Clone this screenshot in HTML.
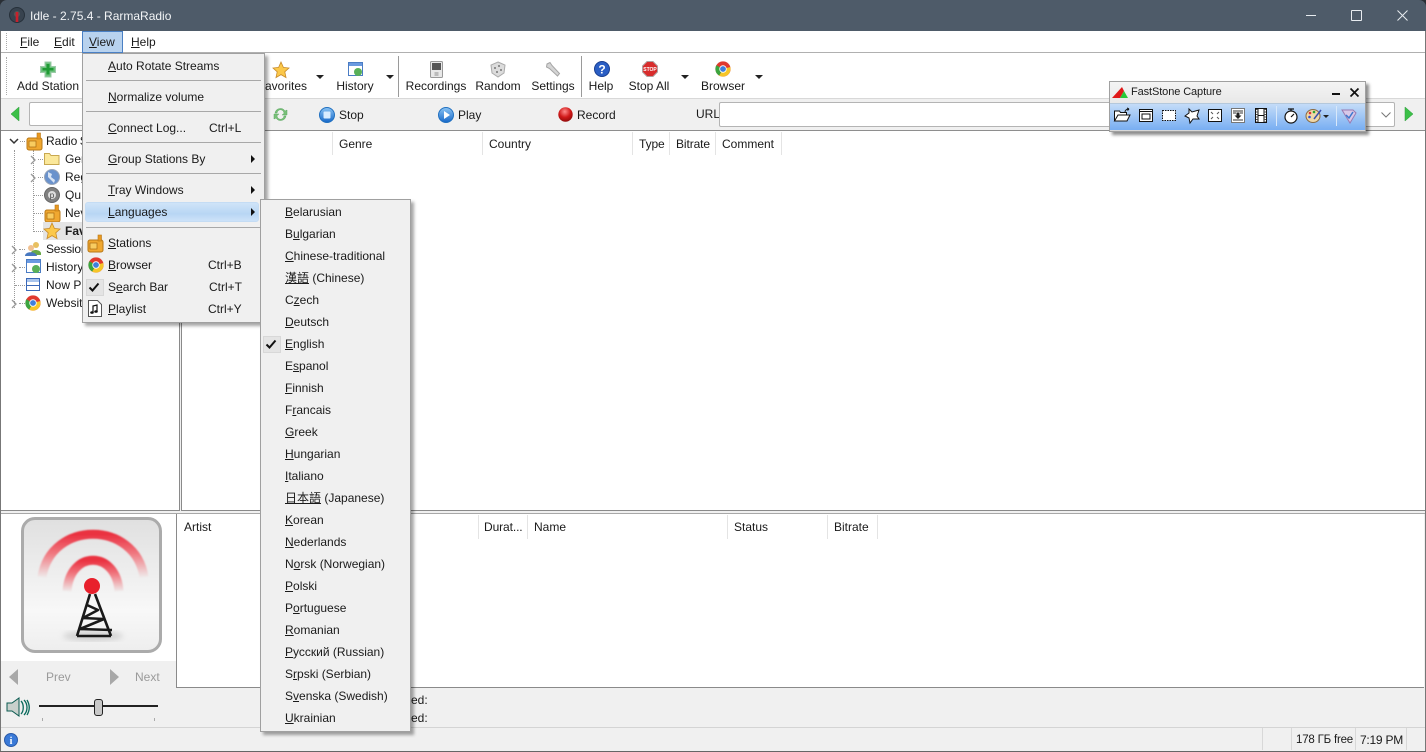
<!DOCTYPE html>
<html><head><meta charset="utf-8">
<style>
html,body{margin:0;padding:0;width:1426px;height:752px;overflow:hidden;background:#f0f0f0}
body{position:relative;font-family:"Liberation Sans","Noto Sans CJK TC",sans-serif;font-size:12px;color:#1a1a1a}
.a{position:absolute}
.t{position:absolute;white-space:nowrap;line-height:16px;height:16px;letter-spacing:0}
.c{transform:translateX(-50%)}
.g{color:#9a9a9a}
svg{position:absolute;overflow:visible}
.sep{position:absolute;height:1px;background:#a8a8a8}
.vd{position:absolute;width:1px;background:#e4e4e4}
.ar{position:absolute;width:0;height:0;border-left:4px solid transparent;border-right:4px solid transparent;border-top:4px solid #222}
.sa{position:absolute;width:0;height:0;border-top:4px solid transparent;border-bottom:4px solid transparent;border-left:4px solid #111}
.dh{position:absolute;height:0;border-top:1px dotted #999}
u{text-underline-offset:1px}
</style></head><body>
<svg width="0" height="0" style="position:absolute"><defs>
<g id="radio"><rect x="1" y="5" width="15" height="12" rx="2" fill="#f0a830" stroke="#b87818"/><rect x="11" y="0" width="3.5" height="6" fill="#e89820" stroke="#b87818" stroke-width=".6"/><rect x="3" y="8" width="7" height="6" fill="#f8cc60" stroke="#a86810" stroke-width=".7"/></g>
<g id="chrome"><circle cx="8" cy="8" r="7.6" fill="#e0392e"/><path d="M8 8L1.4 4.2A7.6 7.6 0 0 0 4.2 14.6z" fill="#3ba53f"/><path d="M8 8l7.3-2A7.6 7.6 0 0 1 4.2 14.6z" fill="#f6c628"/><circle cx="8" cy="8" r="3.7" fill="#fff"/><circle cx="8" cy="8" r="2.9" fill="#3f7fdc"/></g>
<g id="star"><path d="M8 0l2.4 5.4 5.6.6-4.2 3.8 1.2 5.8L8 12.6l-5 3 1.2-5.8L0 6l5.6-.6z" fill="#fbc84a" stroke="#c88a28" stroke-width=".8"/></g>
<g id="globe"><circle cx="8" cy="8" r="7.5" fill="#6a92cc" stroke="#9aa6b8"/><path d="M4 3l4 2-1 3 4 3-1 3-3-3-3-3z" fill="#d8e4f4"/></g>
<linearGradient id="bl" x1="0" y1="0" x2="0" y2="1"><stop offset="0" stop-color="#8cc4f4"/><stop offset="1" stop-color="#1668c8"/></linearGradient>
<radialGradient id="rd" cx=".45" cy=".3" r=".8"><stop offset="0" stop-color="#ff8a8a"/><stop offset=".5" stop-color="#d01818"/><stop offset="1" stop-color="#800808"/></radialGradient>
<linearGradient id="fade" x1="0" y1="0" x2="0" y2="1"><stop offset="0" stop-color="#ea3040"/><stop offset=".45" stop-color="#f07880"/><stop offset="1" stop-color="#efe9e9"/></linearGradient>
<filter id="bl1"><feGaussianBlur stdDeviation=".8"/></filter>
<filter id="bl3"><feGaussianBlur stdDeviation="3"/></filter>
</defs></svg>

<!-- title bar -->
<div class="a" style="left:0;top:0;width:1426px;height:31px;background:#2a2f35"></div>
<div class="a" style="left:0;top:0;width:1426px;height:31px;background:#4e5b69;border-radius:7px 7px 0 0"></div>
<svg style="left:9px;top:7px" width="17" height="17"><circle cx="8" cy="8" r="7.5" fill="#38434f" stroke="#26303a"/><circle cx="8" cy="7" r="3" fill="#555"/><path d="M8 5v10" stroke="#c8202c" stroke-width="2.6"/></svg>
<div class="t" style="left:30px;top:8px;color:#f2f4f6;font-size:12px">Idle - 2.75.4 - RarmaRadio</div>
<div class="a" style="left:1306px;top:15px;width:10px;height:1px;background:#e8ecf0"></div>
<div class="a" style="left:1351px;top:10px;width:9px;height:9px;border:1px solid #e8ecf0;border-radius:1px"></div>
<svg style="left:1397px;top:10px" width="11" height="11"><path d="M.5.5l10 10M10.500.5l-10 10" stroke="#e8ecf0" stroke-width="1"/></svg>

<!-- window base -->
<div class="a" style="left:0;top:31px;width:1px;height:721px;background:#777"></div>
<div class="a" style="left:1425px;top:31px;width:1px;height:721px;background:#777"></div>
<div class="a" style="left:0;top:751px;width:1426px;height:1px;background:#666"></div>

<!-- menu bar -->
<div class="a" style="left:1px;top:31px;width:1424px;height:21px;background:#fff"></div>
<div class="a" style="left:1px;top:52px;width:1424px;height:1px;background:#b0b0b0"></div>
<div class="a" style="left:6px;top:33px;width:0;height:17px;border-left:1px dotted #aaa"></div>
<div class="t" style="left:20px;top:34px"><u>F</u>ile</div>
<div class="t" style="left:54px;top:34px"><u>E</u>dit</div>
<div class="a" style="left:82px;top:31px;width:39px;height:20px;background:#b8d2ee;border:1px solid #4a80c4"></div>
<div class="t" style="left:89px;top:34px"><u>V</u>iew</div>
<div class="t" style="left:131px;top:34px"><u>H</u>elp</div>

<!-- toolbar -->
<div class="a" style="left:1px;top:53px;width:1424px;height:45px;background:#fff"></div>
<div class="a" style="left:6px;top:57px;width:0;height:38px;border-left:1px dotted #aaa"></div>
<svg style="left:40px;top:62px" width="16" height="15"><path d="M5 0h6v4.500h4.500v6H11V15H5v-4.500H.5v-6H5z" fill="#6cc07c" stroke="#9ccaa8"/><path d="M6.500 2h3v4h4v2.500h-4v4h-3v-4h-4V6h4z" fill="#1f9a34"/></svg>
<div class="t c" style="left:48px;top:78px">Add Station</div>
<svg style="left:273px;top:62px" width="16" height="16"><use href="#star"/></svg>
<div class="t" style="left:265px;top:78px">avorites</div>
<div class="ar" style="left:316px;top:75px"></div>
<svg style="left:348px;top:62px" width="16" height="15"><rect x=".5" y=".5" width="14" height="13" fill="#fff" stroke="#4a7cc4"/><rect x="1" y="1" width="13" height="3" fill="#6a9ae0"/><circle cx="10" cy="10" r="4" fill="#58b058"/></svg>
<div class="t c" style="left:355px;top:78px">History</div>
<div class="ar" style="left:386px;top:75px"></div>
<div class="a" style="left:398px;top:56px;width:1px;height:41px;background:#9a9a9a"></div>
<svg style="left:430px;top:61px" width="13" height="17"><rect x=".5" y=".5" width="12" height="16" rx="1" fill="#e8e8e8" stroke="#999"/><rect x="2" y="2" width="9" height="7" fill="#555"/><rect x="4.500" y="11" width="4" height="4" fill="#bbb"/></svg>
<div class="t c" style="left:436px;top:78px">Recordings</div>
<svg style="left:491px;top:62px" width="15" height="15"><path d="M7 0l7 3-1 8-6 4-6-4-1-8z" fill="#dcdcdc" stroke="#aaa"/><circle cx="4" cy="6" r="1" fill="#777"/><circle cx="8" cy="4" r="1" fill="#777"/><circle cx="10" cy="8" r="1" fill="#777"/><circle cx="6" cy="10" r="1" fill="#777"/></svg>
<div class="t c" style="left:498px;top:78px">Random</div>
<svg style="left:545px;top:62px" width="16" height="15"><path d="M2 2l3-1.500 2 3 7.500 8-2 2.500-8-7.500-3-1.500z" fill="#d4d4d4" stroke="#a4a4a4"/></svg>
<div class="t c" style="left:553px;top:78px">Settings</div>
<div class="a" style="left:581px;top:56px;width:1px;height:41px;background:#9a9a9a"></div>
<svg style="left:594px;top:61px" width="16" height="16"><circle cx="8" cy="8" r="7.500" fill="#2a5ec4" stroke="#1a3f90"/><text x="8" y="12.500" font-size="12" font-weight="bold" fill="#fff" text-anchor="middle" font-family="Liberation Sans">?</text></svg>
<div class="t c" style="left:601px;top:78px">Help</div>
<svg style="left:642px;top:61px" width="16" height="16"><path d="M5 .5h6L15.500 5v6L11 15.500H5L.5 11V5z" fill="#d82c2c" stroke="#b0a0a0"/><text x="8" y="10" font-size="5" font-weight="bold" fill="#fff" text-anchor="middle" font-family="Liberation Sans">STOP</text></svg>
<div class="t c" style="left:649px;top:78px">Stop All</div>
<div class="ar" style="left:681px;top:75px"></div>
<svg style="left:715px;top:61px" width="16" height="16"><use href="#chrome"/></svg>
<div class="t c" style="left:723px;top:78px">Browser</div>
<div class="ar" style="left:755px;top:75px"></div>

<!-- search bar -->
<div class="a" style="left:1px;top:98px;width:1424px;height:1px;background:#d8d8d8"></div>
<div class="a" style="left:1px;top:99px;width:1424px;height:31px;background:#f0f0f0"></div>
<svg style="left:11px;top:107px" width="9" height="15"><path d="M8 0v14L0 7z" fill="#3cc048" stroke="#2a9a38" stroke-width=".5"/></svg>
<div class="a" style="left:29px;top:102px;width:60px;height:22px;background:#fff;border:1px solid #b4b4b4;border-radius:2px"></div>
<svg style="left:273px;top:107px" width="15" height="15"><path d="M2 6a5.500 5.500 0 0 1 10-2l2-1v5H9l2-1.500A3.500 3.500 0 0 0 4 6zM13 9a5.500 5.500 0 0 1-10 2l-2 1V7h5L4 8.500A3.500 3.500 0 0 0 11 9z" fill="#78c078" stroke="#5aa860" stroke-width=".5"/></svg>
<svg style="left:319px;top:107px" width="16" height="16"><circle cx="8" cy="8" r="7.500" fill="url(#bl)" stroke="#2070c0"/><rect x="4.500" y="4.500" width="7" height="7" rx="1" fill="#d8ecff"/></svg>
<div class="t" style="left:339px;top:107px">Stop</div>
<svg style="left:438px;top:107px" width="16" height="16"><circle cx="8" cy="8" r="7.500" fill="url(#bl)" stroke="#2070c0"/><path d="M6 4l6 4-6 4z" fill="#fff"/></svg>
<div class="t" style="left:458px;top:107px">Play</div>
<svg style="left:558px;top:107px" width="15" height="15"><circle cx="7.500" cy="7.500" r="7.200" fill="url(#rd)"/></svg>
<div class="t" style="left:577px;top:107px">Record</div>
<div class="t" style="left:696px;top:106px">URL</div>
<div class="a" style="left:719px;top:102px;width:674px;height:23px;background:#fff;border:1px solid #b4b4b4;border-radius:2px"></div>
<svg style="left:1381px;top:112px" width="10" height="6"><path d="M.5.500L5 5 9.500.5" fill="none" stroke="#777"/></svg>
<svg style="left:1404px;top:107px" width="9" height="15"><path d="M1 0v14l8-7z" fill="#3cc048" stroke="#2a9a38" stroke-width=".5"/></svg>
<div class="a" style="left:1px;top:130px;width:1424px;height:1px;background:#8e8e8e"></div>

<!-- tree panel -->
<div class="a" style="left:1px;top:131px;width:178px;height:379px;background:#fff;border-right:1px solid #8a8a8a;border-bottom:1px solid #8a8a8a"></div>
<div class="a" style="left:14px;top:150px;width:0;height:158px;border-left:1px dotted #999"></div>
<div class="a" style="left:33px;top:150px;width:0;height:82px;border-left:1px dotted #999"></div>
<div class="dh" style="left:20px;top:141px;width:5px"></div>
<div class="dh" style="left:38px;top:159px;width:5px"></div>
<div class="dh" style="left:38px;top:177px;width:5px"></div>
<div class="dh" style="left:34px;top:195px;width:9px"></div>
<div class="dh" style="left:34px;top:213px;width:9px"></div>
<div class="dh" style="left:34px;top:231px;width:9px"></div>
<div class="dh" style="left:19px;top:249px;width:6px"></div>
<div class="dh" style="left:19px;top:267px;width:6px"></div>
<div class="dh" style="left:15px;top:285px;width:10px"></div>
<div class="dh" style="left:19px;top:303px;width:6px"></div>
<svg style="left:9px;top:138px" width="10" height="7"><path d="M1 1l4 4 4-4" fill="none" stroke="#333" stroke-width="1.500"/></svg>
<svg style="left:26px;top:133px" width="17" height="17"><use href="#radio"/></svg>
<div class="t" style="left:46px;top:133px;word-spacing:-1px">Radio S</div>
<svg style="left:30px;top:155px" width="6" height="10"><path d="M1 1l4 4-4 4" fill="none" stroke="#999" stroke-width="1.300"/></svg>
<svg style="left:44px;top:151px" width="16" height="14"><path d="M.5 2.500h5l1.500 2h8v9H.5z" fill="#fbe89a" stroke="#c8a850"/></svg>
<div class="t" style="left:65px;top:151px">Gen</div>
<svg style="left:30px;top:173px" width="6" height="10"><path d="M1 1l4 4-4 4" fill="none" stroke="#999" stroke-width="1.300"/></svg>
<svg style="left:44px;top:169px" width="16" height="16"><use href="#globe"/></svg>
<div class="t" style="left:65px;top:169px">Reg</div>
<svg style="left:44px;top:187px" width="16" height="16"><circle cx="8" cy="8" r="7.500" fill="#808080" stroke="#666"/><circle cx="8" cy="8" r="4" fill="#ddd"/><text x="8" y="11" font-size="8" fill="#444" text-anchor="middle" font-family="Liberation Sans">p</text></svg>
<div class="t" style="left:65px;top:187px">Qu</div>
<svg style="left:44px;top:205px" width="17" height="17"><use href="#radio"/></svg>
<div class="t" style="left:65px;top:205px">Nev</div>
<div class="a" style="left:43px;top:222px;width:40px;height:18px;background:#e4e4e4"></div>
<svg style="left:44px;top:223px" width="16" height="16"><use href="#star"/></svg>
<div class="t" style="left:65px;top:223px;font-weight:bold">Fav</div>
<svg style="left:11px;top:245px" width="6" height="10"><path d="M1 1l4 4-4 4" fill="none" stroke="#999" stroke-width="1.300"/></svg>
<svg style="left:25px;top:241px" width="17" height="16"><circle cx="11" cy="4" r="3" fill="#e8c060"/><path d="M6 12c0-4 9-4 10 0v2H6z" fill="#68a848"/><circle cx="6" cy="7" r="3" fill="#f0c090"/><path d="M0 15c0-5 11-5 12 0z" fill="#4878c0"/></svg>
<div class="t" style="left:46px;top:241px;letter-spacing:-.2px">Session</div>
<svg style="left:11px;top:263px" width="6" height="10"><path d="M1 1l4 4-4 4" fill="none" stroke="#999" stroke-width="1.300"/></svg>
<svg style="left:26px;top:259px" width="16" height="15"><rect x=".5" y=".5" width="14" height="13" fill="#fff" stroke="#4a7cc4"/><rect x="1" y="1" width="13" height="3" fill="#6a9ae0"/><circle cx="10" cy="10" r="4" fill="#58b058"/></svg>
<div class="t" style="left:46px;top:259px">History</div>
<svg style="left:26px;top:278px" width="14" height="13"><rect x=".5" y=".5" width="13" height="12" fill="#fff" stroke="#3a68b8"/><rect x="1" y="1" width="12" height="3" fill="#a8c4ec"/><path d="M1 7.500h12" stroke="#3a68b8"/></svg>
<div class="t" style="left:46px;top:277px">Now P</div>
<svg style="left:11px;top:299px" width="6" height="10"><path d="M1 1l4 4-4 4" fill="none" stroke="#999" stroke-width="1.300"/></svg>
<svg style="left:25px;top:295px" width="16" height="16"><use href="#chrome"/></svg>
<div class="t" style="left:46px;top:295px">Websit</div>

<!-- stations list -->
<div class="a" style="left:181px;top:131px;width:1243px;height:379px;background:#fff;border-left:1px solid #8a8a8a;border-bottom:1px solid #8a8a8a;box-sizing:content-box"></div>
<div class="vd" style="left:332px;top:132px;height:23px"></div>
<div class="vd" style="left:482px;top:132px;height:23px"></div>
<div class="vd" style="left:632px;top:132px;height:23px"></div>
<div class="vd" style="left:669px;top:132px;height:23px"></div>
<div class="vd" style="left:715px;top:132px;height:23px"></div>
<div class="vd" style="left:781px;top:132px;height:23px"></div>
<div class="t" style="left:339px;top:136px">Genre</div>
<div class="t" style="left:489px;top:136px">Country</div>
<div class="t" style="left:639px;top:136px;letter-spacing:-.1px">Type</div>
<div class="t" style="left:676px;top:136px;letter-spacing:-.1px">Bitrate</div>
<div class="t" style="left:722px;top:136px">Comment</div>

<!-- lower area -->
<div class="a" style="left:1px;top:513px;width:1424px;height:1px;background:#a8a8a8"></div>
<div class="a" style="left:1px;top:514px;width:175px;height:147px;background:#fff"></div>
<div class="a" style="left:21px;top:517px;width:135px;height:130px;border:3px solid #ababab;border-radius:14px;background:linear-gradient(#e0e0e0,#f8f8f8 70%,#eeeeee)"></div>
<svg style="left:21px;top:517px" width="142" height="137">
<g filter="url(#bl1)">
<path d="M21 60C30 3 114 3 123 60" fill="none" stroke="url(#fade)" stroke-width="9"/>
<path d="M46 74C49 33 95 33 98 74" fill="none" stroke="url(#fade)" stroke-width="9"/>
</g>
<ellipse cx="72" cy="119" rx="30" ry="5" fill="#c4c4c4" opacity=".7" filter="url(#bl3)"/>
<circle cx="71" cy="69" r="8" fill="#e8202c"/>
<path d="M69 77L56 119M74 77L90 119M66 88l11 5-15 8 21 1-24 10 32 1M56 119h34" fill="none" stroke="#1a1a1a" stroke-width="2.600" stroke-linejoin="round"/>
</svg>
<div class="a" style="left:176px;top:514px;width:1248px;height:174px;background:#fff;border-left:1px solid #8a8a8a;border-bottom:1px solid #8a8a8a;box-sizing:border-box"></div>
<div class="vd" style="left:478px;top:515px;height:24px"></div>
<div class="vd" style="left:527px;top:515px;height:24px"></div>
<div class="vd" style="left:727px;top:515px;height:24px"></div>
<div class="vd" style="left:827px;top:515px;height:24px"></div>
<div class="vd" style="left:877px;top:515px;height:24px"></div>
<div class="t" style="left:184px;top:519px">Artist</div>
<div class="t" style="left:484px;top:519px;letter-spacing:-.1px">Durat...</div>
<div class="t" style="left:534px;top:519px">Name</div>
<div class="t" style="left:734px;top:519px">Status</div>
<div class="t" style="left:834px;top:519px">Bitrate</div>

<svg style="left:9px;top:669px" width="10" height="16"><path d="M9 0v16L0 8z" fill="#a8a8a8"/></svg>
<div class="t g" style="left:46px;top:669px">Prev</div>
<svg style="left:110px;top:669px" width="10" height="16"><path d="M0 0v16l9-8z" fill="#a8a8a8"/></svg>
<div class="t g" style="left:135px;top:669px">Next</div>

<svg style="left:6px;top:697px" width="24" height="21"><path d="M1 6h5l7-5v18l-7-5H1z" fill="#c8d0cc" stroke="#0a5a50"/><path d="M15 4c3 3 3 10 0 13M18 3c4 4 4 11 0 15M21 3c3 5 3 10 0 15" fill="none" stroke="#0a6a5c" stroke-width="1.300"/></svg>
<div class="a" style="left:39px;top:705px;width:119px;height:2px;background:#222"></div>
<div class="a" style="left:94px;top:699px;width:7px;height:15px;background:#c8c8c8;border:1px solid #222;border-radius:3px"></div>
<div class="a" style="left:42px;top:718px;width:1px;height:3px;background:#aaa"></div>
<div class="a" style="left:154px;top:718px;width:1px;height:3px;background:#aaa"></div>

<div class="t" style="left:411px;top:692px">ed:</div>
<div class="t" style="left:411px;top:710px">ed:</div>

<!-- status bar -->
<div class="a" style="left:1px;top:727px;width:1424px;height:1px;background:#d4d4d4"></div>
<svg style="left:4px;top:733px" width="14" height="14"><circle cx="7" cy="7" r="6.500" fill="#3a7ad8" stroke="#2a5aa8"/><text x="7" y="11" font-size="10" font-weight="bold" fill="#fff" text-anchor="middle" font-family="Liberation Serif">i</text></svg>
<div class="vd" style="left:1262px;top:728px;height:22px;background:#d8d8d8"></div>
<div class="vd" style="left:1291px;top:728px;height:22px;background:#d8d8d8"></div>
<div class="vd" style="left:1355px;top:728px;height:22px;background:#d8d8d8"></div>
<div class="vd" style="left:1406px;top:728px;height:22px;background:#d8d8d8"></div>
<div class="t" style="left:1296px;top:732px;font-size:11.500px;letter-spacing:-.2px">178 ГБ free</div>
<div class="t" style="left:1360px;top:732px;letter-spacing:-.25px">7:19 PM</div>

<!-- View menu -->
<div class="a" style="left:82px;top:53px;width:181px;height:268px;background:#f0f0f0;border:1px solid #a0a0a0;box-shadow:3px 3px 3px rgba(0,0,0,.35)"></div>
<div class="t" style="left:108px;top:58px"><u>A</u>uto Rotate Streams</div>
<div class="sep" style="left:86px;top:80px;width:175px"></div>
<div class="t" style="left:108px;top:89px"><u>N</u>ormalize volume</div>
<div class="sep" style="left:86px;top:111px;width:175px"></div>
<div class="t" style="left:108px;top:120px"><u>C</u>onnect Log...</div>
<div class="t" style="left:209px;top:120px">Ctrl+L</div>
<div class="sep" style="left:86px;top:142px;width:175px"></div>
<div class="t" style="left:108px;top:151px"><u>G</u>roup Stations By</div>
<div class="sa" style="left:251px;top:155px"></div>
<div class="sep" style="left:86px;top:173px;width:175px"></div>
<div class="t" style="left:108px;top:182px"><u>T</u>ray Windows</div>
<div class="sa" style="left:251px;top:186px"></div>
<div class="a" style="left:85px;top:202px;width:174px;height:20px;border-radius:3px;border:1px solid #c4dcf4;box-sizing:border-box;background:linear-gradient(#cfe4f8,#b8d6f4 60%,#cde2f8)"></div>
<div class="t" style="left:108px;top:204px"><u>L</u>anguages</div>
<div class="sa" style="left:251px;top:208px"></div>
<div class="sep" style="left:86px;top:227px;width:175px"></div>
<svg style="left:87px;top:235px" width="17" height="17"><use href="#radio"/></svg>
<div class="t" style="left:108px;top:235px"><u>S</u>tations</div>
<svg style="left:88px;top:257px" width="16" height="16"><use href="#chrome"/></svg>
<div class="t" style="left:108px;top:257px"><u>B</u>rowser</div>
<div class="t" style="left:208px;top:257px">Ctrl+B</div>
<div class="a" style="left:86px;top:279px;width:16px;height:15px;background:#e4e4e4;border:1px solid #d8d8d8"></div>
<svg style="left:88px;top:282px" width="12" height="11"><path d="M1.500 5.500l3 3 6-7" fill="none" stroke="#111" stroke-width="2"/></svg>
<div class="t" style="left:108px;top:279px">S<u>e</u>arch Bar</div>
<div class="t" style="left:209px;top:279px">Ctrl+T</div>
<svg style="left:88px;top:300px" width="14" height="17"><path d="M.5.500h9l4 4v12H.5z" fill="#fff" stroke="#555"/><path d="M5 12V6l4-1v6" fill="none" stroke="#111" stroke-width="1.200"/><ellipse cx="4" cy="12.500" rx="1.800" ry="1.300" fill="#111"/><ellipse cx="8" cy="11.500" rx="1.800" ry="1.300" fill="#111"/></svg>
<div class="t" style="left:108px;top:301px"><u>P</u>laylist</div>
<div class="t" style="left:208px;top:301px">Ctrl+Y</div>

<!-- Languages submenu -->
<div class="a" style="left:260px;top:199px;width:149px;height:531px;background:#f0f0f0;border:1px solid #a0a0a0;box-shadow:3px 3px 3px rgba(0,0,0,.35)"></div>
<div class="t" style="left:285px;top:204px"><u>B</u>elarusian</div>
<div class="t" style="left:285px;top:226px">B<u>u</u>lgarian</div>
<div class="t" style="left:285px;top:248px"><u>C</u>hinese-traditional</div>
<div class="t" style="left:285px;top:270px"><u>漢語</u> (Chinese)</div>
<div class="t" style="left:285px;top:292px">C<u>z</u>ech</div>
<div class="t" style="left:285px;top:314px"><u>D</u>eutsch</div>
<div class="a" style="left:263px;top:336px;width:16px;height:15px;background:#e4e4e4;border:1px solid #d8d8d8"></div>
<svg style="left:265px;top:339px" width="12" height="11"><path d="M1.500 5.500l3 3 6-7" fill="none" stroke="#111" stroke-width="2"/></svg>
<div class="t" style="left:285px;top:336px"><u>E</u>nglish</div>
<div class="t" style="left:285px;top:358px">E<u>s</u>panol</div>
<div class="t" style="left:285px;top:380px"><u>F</u>innish</div>
<div class="t" style="left:285px;top:402px">F<u>r</u>ancais</div>
<div class="t" style="left:285px;top:424px"><u>G</u>reek</div>
<div class="t" style="left:285px;top:446px"><u>H</u>ungarian</div>
<div class="t" style="left:285px;top:468px"><u>I</u>taliano</div>
<div class="t" style="left:285px;top:490px"><u>日本語</u> (Japanese)</div>
<div class="t" style="left:285px;top:512px"><u>K</u>orean</div>
<div class="t" style="left:285px;top:534px"><u>N</u>ederlands</div>
<div class="t" style="left:285px;top:556px">N<u>o</u>rsk (Norwegian)</div>
<div class="t" style="left:285px;top:578px"><u>P</u>olski</div>
<div class="t" style="left:285px;top:600px">P<u>o</u>rtuguese</div>
<div class="t" style="left:285px;top:622px"><u>R</u>omanian</div>
<div class="t" style="left:285px;top:644px"><u>Р</u>усский (Russian)</div>
<div class="t" style="left:285px;top:666px">S<u>r</u>pski (Serbian)</div>
<div class="t" style="left:285px;top:688px">S<u>v</u>enska (Swedish)</div>
<div class="t" style="left:285px;top:710px"><u>U</u>krainian</div>

<!-- FastStone Capture -->
<div class="a" style="left:1109px;top:81px;width:255px;height:49px;border:1px solid #a0a0a0;background:linear-gradient(#f4f4f4,#d8d8d8);box-shadow:3px 3px 3px rgba(0,0,0,.45)"></div>
<div class="a" style="left:1110px;top:103px;width:255px;height:27px;background:linear-gradient(#c4dcf8,#78aef2);border-top:1px solid #b4c8dc;box-sizing:border-box"></div>
<svg style="left:1112px;top:85px" width="17" height="13"><path d="M0 13L10 2l2 4-4 7z" fill="#e01818"/><path d="M8 13l4-7 4 7z" fill="#28c838"/></svg>
<div class="t" style="left:1131px;top:84px;font-size:11px;letter-spacing:-.1px">FastStone Capture</div>
<div class="a" style="left:1332px;top:93px;width:8px;height:2px;background:#111"></div>
<svg style="left:1350px;top:88px" width="9" height="9"><path d="M.5.500l8 8M8.500.500l-8 8" stroke="#111" stroke-width="1.700"/></svg>
<svg style="left:1114px;top:107px" width="17" height="16"><path d="M.5 14V4h5l1 1.500h6V8M.5 14L4 8h12l-3 6z" fill="#fff" stroke="#111"/><path d="M11 5c0-2 2-3 4-3m0 0l-2-1m2 1l-1.500 1.500" fill="none" stroke="#111"/></svg>
<svg style="left:1139px;top:109px" width="14" height="13"><rect x=".5" y=".5" width="13" height="12" fill="#fff" stroke="#111"/><path d="M1 2.500h12" stroke="#111"/><rect x="3" y="5" width="8" height="5" fill="none" stroke="#111"/></svg>
<svg style="left:1162px;top:110px" width="14" height="11"><rect x=".5" y=".5" width="13" height="10" fill="#fff" stroke="#111" stroke-dasharray="1.500 1"/></svg>
<svg style="left:1184px;top:108px" width="16" height="16"><path d="M5 1l3 3 7-2-2 6 2 3-6 0-3 4-1-5-4-2 4-3z" fill="#fff" stroke="#111"/></svg>
<svg style="left:1208px;top:109px" width="14" height="13"><rect x=".5" y=".5" width="13" height="12" fill="#fff" stroke="#111"/><path d="M3 3l2 2M11 3L9 5M3 10l2-2M11 10L9 8" stroke="#555"/></svg>
<svg style="left:1231px;top:108px" width="14" height="15"><rect x=".5" y=".5" width="13" height="14" fill="#fff" stroke="#777"/><path d="M2 3h10M2 5h3M9 5h3M2 12h10" stroke="#333"/><path d="M5.500 4.500h3v3h2L7 11 3.500 7.500h2z" fill="#222"/></svg>
<svg style="left:1255px;top:108px" width="12" height="15"><rect x=".5" y=".5" width="11" height="14" fill="#fff" stroke="#111"/><path d="M3 .5v14M9 .5v14M3 7.500h6" stroke="#111"/><path d="M1.750 1v13M10.250 1v13" stroke="#111" stroke-dasharray="1 1.500"/></svg>
<div class="a" style="left:1276px;top:106px;width:1px;height:20px;background:#d8e8fa"></div>
<svg style="left:1284px;top:108px" width="14" height="16"><circle cx="7" cy="9" r="6" fill="#fff" stroke="#111" stroke-width="1.200"/><path d="M4 1h6M7 1v2M7 9l3-3" stroke="#111" stroke-width="1.200"/></svg>
<svg style="left:1306px;top:108px" width="16" height="15"><ellipse cx="7" cy="8" rx="7" ry="6.500" fill="#f0d8a8" stroke="#8a6a40"/><circle cx="4" cy="5" r="1.300" fill="#e03030"/><circle cx="8" cy="4" r="1.300" fill="#30a030"/><circle cx="3.500" cy="9" r="1.300" fill="#3050d0"/><path d="M8 11l7-9" stroke="#3a50b0" stroke-width="1.500"/></svg>
<div class="ar" style="left:1323px;top:115px;border-left-width:3px;border-right-width:3px;border-top-width:3px"></div>
<div class="a" style="left:1336px;top:106px;width:1px;height:20px;background:#d8e8fa"></div>
<svg style="left:1341px;top:108px" width="16" height="16"><path d="M1 2h11l3 3-6 10z" fill="#d8c8e8" stroke="#9a7ab0"/><path d="M5 7l3 3 4-6" fill="none" stroke="#3a78d0" stroke-width="1.500"/></svg>
</body></html>
